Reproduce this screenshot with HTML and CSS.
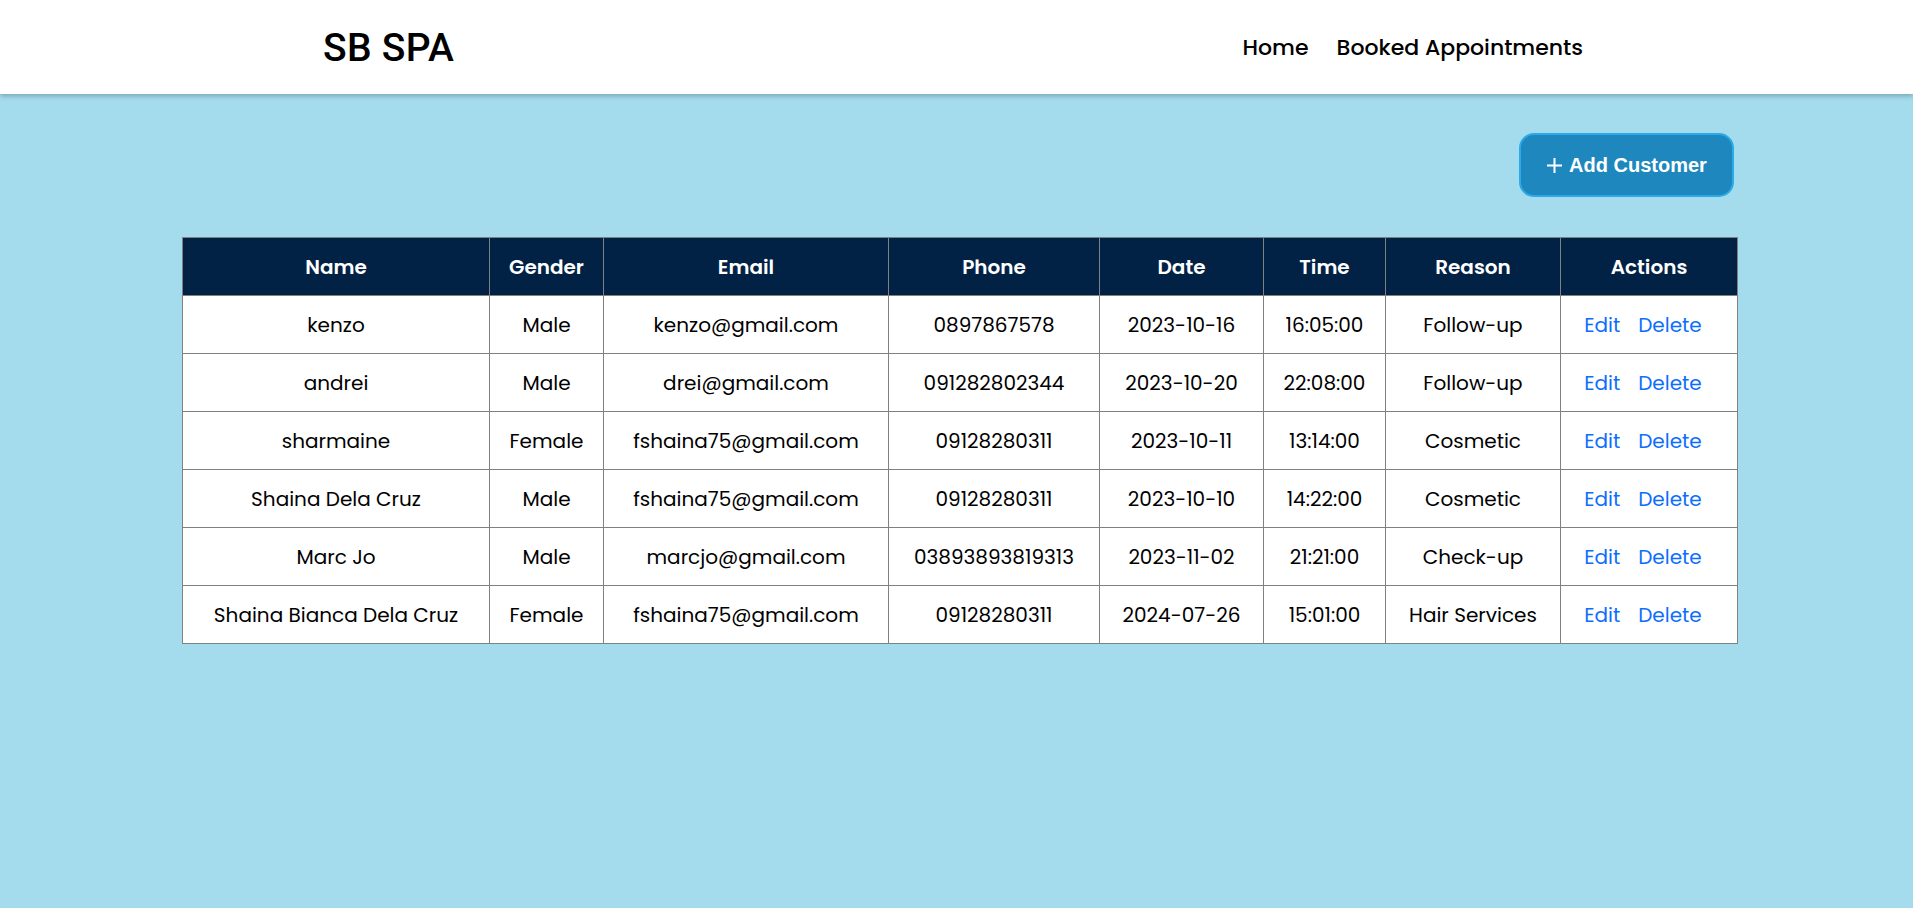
FILE: index.html
```html
<!DOCTYPE html>
<html lang="en">
<head>
<meta charset="utf-8">
<title>SB SPA</title>
<link rel="stylesheet" href="styles.css">
</head>
<body>
<header class="topbar">
  <div class="topbar-inner">
    <div class="brand">SB SPA</div>
    <nav class="nav">
      <a href="#" class="nav-link">Home</a>
      <a href="#" class="nav-link">Booked Appointments</a>
    </nav>
  </div>
</header>
<main class="content">
  <div class="toolbar">
    <button class="add-btn" type="button">
      <svg class="plus" width="17" height="17" viewBox="0 0 17 17"><path d="M8.5 1v15M1 8.5h15" stroke="#fff" stroke-width="2" fill="none"/></svg>
      <span>Add Customer</span>
    </button>
  </div>
  <table class="grid">
    <colgroup>
      <col class="c-name"><col class="c-gender"><col class="c-email"><col class="c-phone"><col class="c-date"><col class="c-time"><col class="c-reason"><col class="c-actions">
    </colgroup>
    <thead>
      <tr><th>Name</th><th>Gender</th><th>Email</th><th>Phone</th><th>Date</th><th>Time</th><th>Reason</th><th>Actions</th></tr>
    </thead>
    <tbody>
      <tr><td>kenzo</td><td>Male</td><td>kenzo@gmail.com</td><td>0897867578</td><td>2023-10-16</td><td>16:05:00</td><td>Follow-up</td><td class="actions"><a href="#">Edit</a><a href="#">Delete</a></td></tr>
      <tr><td>andrei</td><td>Male</td><td>drei@gmail.com</td><td>091282802344</td><td>2023-10-20</td><td>22:08:00</td><td>Follow-up</td><td class="actions"><a href="#">Edit</a><a href="#">Delete</a></td></tr>
      <tr><td>sharmaine</td><td>Female</td><td>fshaina75@gmail.com</td><td>09128280311</td><td>2023-10-11</td><td>13:14:00</td><td>Cosmetic</td><td class="actions"><a href="#">Edit</a><a href="#">Delete</a></td></tr>
      <tr><td>Shaina Dela Cruz</td><td>Male</td><td>fshaina75@gmail.com</td><td>09128280311</td><td>2023-10-10</td><td>14:22:00</td><td>Cosmetic</td><td class="actions"><a href="#">Edit</a><a href="#">Delete</a></td></tr>
      <tr><td>Marc Jo</td><td>Male</td><td>marcjo@gmail.com</td><td>03893893819313</td><td>2023-11-02</td><td>21:21:00</td><td>Check-up</td><td class="actions"><a href="#">Edit</a><a href="#">Delete</a></td></tr>
      <tr><td>Shaina Bianca Dela Cruz</td><td>Female</td><td>fshaina75@gmail.com</td><td>09128280311</td><td>2024-07-26</td><td>15:01:00</td><td>Hair Services</td><td class="actions"><a href="#">Edit</a><a href="#">Delete</a></td></tr>
    </tbody>
  </table>
</main>
</body>
</html>
```

FILE: styles.css
```css
* { box-sizing: border-box; }
html, body { margin: 0; padding: 0; }
body {
  background: #a4dcee;
  font-family: "Poppins", "Open Sans", "Noto Sans", sans-serif;
  color: #000;
  min-height: 908px;
}
.topbar {
  background: #fff;
  height: 94px;
  box-shadow: 0 2px 5px rgba(0,0,0,0.25);
  position: relative;
  z-index: 1;
}
.topbar-inner {
  height: 100%;
  padding: 0 330px 0 323px;
  display: flex;
  align-items: center;
  justify-content: space-between;
}
.brand {
  font-family: Roboto, "Liberation Sans", sans-serif;
  font-size: 39px;
  font-weight: 500;
  letter-spacing: 0.3px;
  margin-top: 2px;
}
.nav { display: flex; gap: 28px; margin-top: 0; }
.nav-link {
  color: #000;
  text-decoration: none;
  font-size: 22px;
  font-weight: 500;
}
.content { padding: 39px 176px 0 182px; }
.toolbar { display: flex; justify-content: flex-end; }
.add-btn {
  width: 215px;
  height: 64px;
  background: #1e87be;
  border: 2px solid #2aaae8;
  border-radius: 15px;
  color: #fff;
  font-family: "Liberation Sans", Arial, sans-serif;
  font-weight: bold;
  font-size: 20px;
  display: flex;
  align-items: center;
  justify-content: center;
  gap: 6px;
  padding: 0;
  margin-right: 3px;
}
.plus { margin-top: 1px; }
.grid {
  margin-top: 40px;
  width: 1555px;
  border-collapse: collapse;
  table-layout: fixed;
  background: #fff;
}
.c-name { width: 307px; }
.c-gender { width: 114px; }
.c-email { width: 285px; }
.c-phone { width: 211px; }
.c-date { width: 164px; }
.c-time { width: 122px; }
.c-reason { width: 175px; }
.c-actions { width: 177px; }
.grid th, .grid td {
  border: 1px solid #808080;
  text-align: center;
  height: 58px;
  padding: 0;
  font-size: 20px;
  white-space: nowrap;
}
.grid th {
  background: #012245;
  color: #fff;
  font-weight: 600;
}
.grid td { font-weight: 400; }
.grid td.actions { padding-right: 12px; }
.actions a {
  color: #0d6efd;
  text-decoration: none;
  margin: 0 9px;
}
```
